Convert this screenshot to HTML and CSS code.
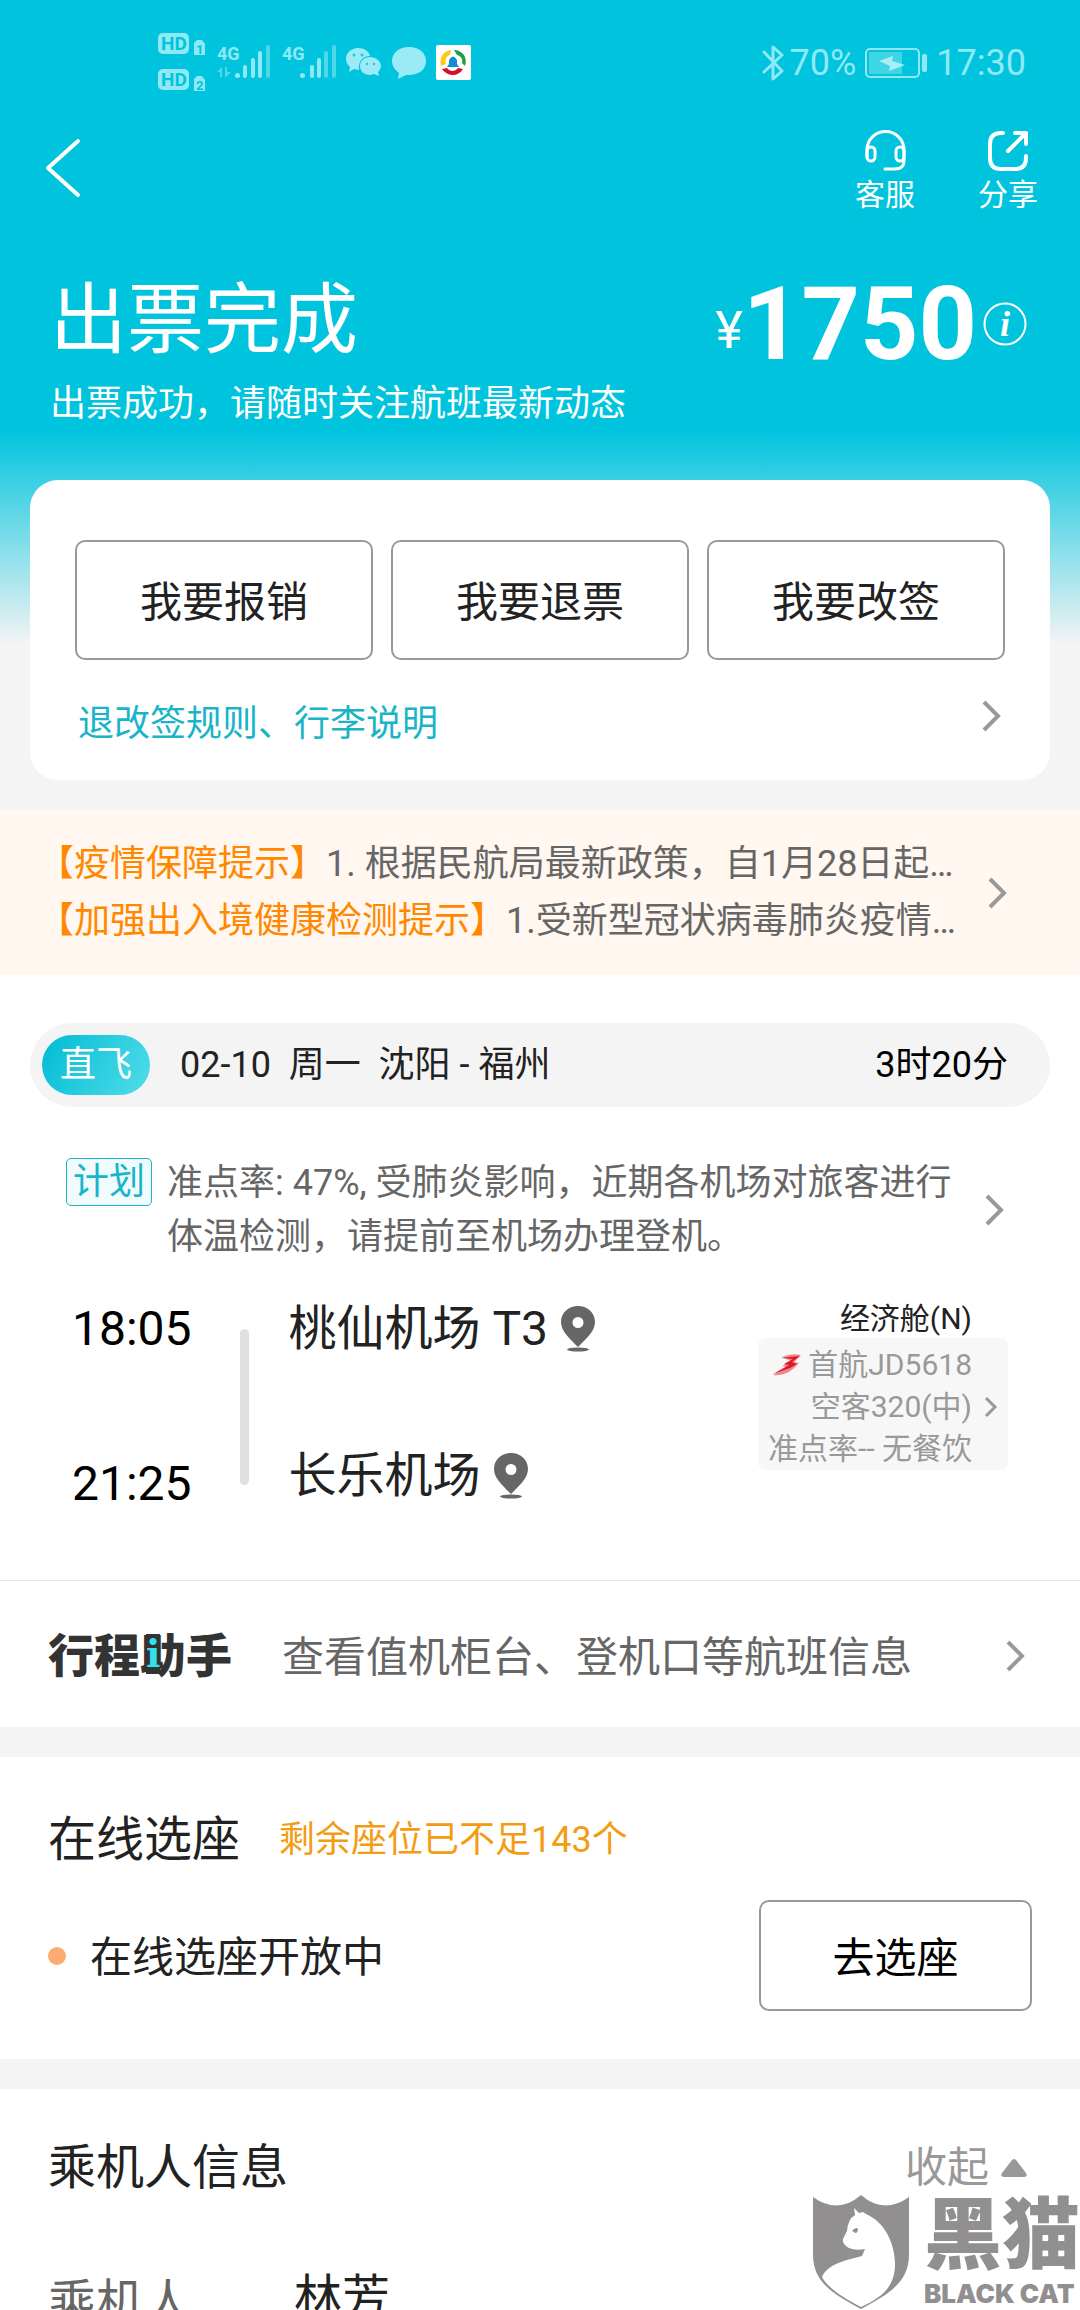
FILE: index.html
```html
<!DOCTYPE html>
<html lang="zh-CN">
<head>
    <meta charset="UTF-8">
    <meta name="viewport" content="width=device-width, initial-scale=1.0">
    <title>订单详情</title>
    <link rel="stylesheet" href="styles.css">
</head>
<body>

<div class="page">

    <div class="statusbar">
        <svg class="status-icons" width="314" height="60" viewBox="0 0 314 60">
            <g fill="#8fe9f5">
                <rect x="0" y="0" width="31" height="21" rx="5"/>
                <rect x="0" y="36" width="31" height="21" rx="5"/>
                <path d="M39 7h5l3 4v11H36V10z"/>
                <path d="M39 43h5l3 4v11H36V46z"/>
                <text class="sim" x="59" y="27">4G</text>
                <text class="sim" x="124" y="27">4G</text>
                <circle cx="79.500" cy="42.500" r="2.500"/>
                <rect x="85" y="32" width="4" height="13" rx="2"/>
                <rect x="93" y="25" width="4" height="20" rx="2"/>
                <rect x="100" y="18" width="4" height="27" rx="2"/>
                <circle cx="144.500" cy="42.500" r="2.500"/>
                <rect x="152" y="32" width="4" height="13" rx="2"/>
                <rect x="159" y="25" width="4" height="20" rx="2"/>
            </g>
            <g fill="#4fd8e9">
                <rect x="108" y="12" width="4" height="33" rx="2"/>
                <rect x="166" y="18" width="4" height="27" rx="2"/>
                <rect x="174" y="12" width="4" height="33" rx="2"/>
                <path d="M59 39l5-5v10h-2v-5zM67 34h2v5h4l-6 6z"/>
            </g>
            <text class="hd" x="3" y="17">HD</text>
            <text class="hd" x="3" y="53">HD</text>
            <text class="sim-no" x="38" y="21">1</text>
            <text class="sim-no" x="38" y="57">2</text>
            <g fill="#9aebf5">
                <path d="M200 15c-7 0-12 5-12 11 0 4 2 6 4 8l-1 5 5-3 5 1c-1-9 4-14 11-14-1-5-6-8-12-8z"/>
                <path d="M212 24c-6 0-10 4-10 9s4 9 10 9l4-1 5 2-1-4c2-2 3-4 3-6 0-5-5-9-11-9z"/>
                <path d="M251 14c-10 0-17 6-17 14 0 5 3 9 7 12l-1 6 8-4c12 1 20-5 20-14 0-8-7-14-17-14z"/>
            </g>
            <g fill="#1ec9df">
                <circle cx="196" cy="22" r="1.500"/><circle cx="204" cy="22" r="1.500"/>
                <circle cx="209" cy="31" r="1.200"/><circle cx="216" cy="31" r="1.200"/>
            </g>
            <rect x="278" y="12" width="35" height="35" rx="2" fill="#fff"/>
            <path d="M283 33c-2-8 2-15 10-16l-1 5c-4 1-5 5-4 9z" fill="#fcc917"/>
            <path d="M296 17c9 0 14 8 11 16l-3-3c1-4-1-7-5-8z" fill="#1fa045"/>
            <path d="M284 36c6 8 16 8 21 0l-5-1c-3 4-8 4-11 0z" fill="#d5102a"/>
            <path d="M291 31v-4q4-7 8 0v4l2 3h-12z" fill="#168bd2"/>
        </svg>
        <div class="status-right">
            <svg width="22" height="36" viewBox="0 0 22 36" fill="none" stroke="#8fe9f5" stroke-width="3" stroke-linejoin="round" stroke-linecap="round">
                <path d="M2 7l18 19-9 8V2l9 8L2 27"/>
            </svg>
            <span>70%</span>
            <svg class="battery" width="62" height="30" viewBox="0 0 62 30">
                <rect x="1" y="1" width="53" height="28" rx="4" fill="none" stroke="#8fe9f5" stroke-width="2"/>
                <rect x="4" y="4" width="33" height="22" fill="#3fd5e7"/>
                <path d="M14 13l14-5-1 5 13 4-16 6 1-5z" fill="#a8eef7"/>
                <rect x="57" y="6" width="5" height="18" rx="2" fill="#8fe9f5"/>
            </svg>
            <span>17:30</span>
        </div>
    </div>

    <div class="navbar">
        <button class="back-button" aria-label="返回">
            <svg width="36" height="60" viewBox="0 0 36 60" fill="none" stroke="#fff" stroke-width="4" stroke-linecap="round" stroke-linejoin="round">
                <path d="M33 3L3 30l30 27"/>
            </svg>
        </button>
        <div class="nav-actions">
            <button class="nav-button">
                <svg width="42" height="42" viewBox="0 0 42 42" fill="none" stroke="#fff" stroke-width="3" stroke-linecap="round">
                    <path d="M3 27V20a18 18 0 0 1 37 0v11q0 8-9 8H21"/>
                    <rect x="3" y="17" width="8" height="14" rx="4"/>
                    <rect x="32" y="17" width="8" height="14" rx="4"/>
                </svg>
                <span>客服</span>
            </button>
            <button class="nav-button">
                <svg width="42" height="42" viewBox="0 0 42 42" fill="none" stroke="#fff" stroke-width="4" stroke-linecap="round" stroke-linejoin="round">
                    <path d="M16 3h-2Q3 3 3 14v14q0 11 11 11h14q11 0 11-11v-2M28 3h11v11M39 3L21 21"/>
                </svg>
                <span>分享</span>
            </button>
        </div>
    </div>

    <div class="summary">
        <div>
            <h1>出票完成</h1>
            <p>出票成功，请随时关注航班最新动态</p>
        </div>
        <div class="price">
            <span class="currency">¥</span><span class="amount">1750</span>
            <svg width="44" height="44" viewBox="0 0 44 44">
                <circle cx="22" cy="22" r="20.500" fill="none" stroke="#fff" stroke-width="2"/>
                <text class="info" x="22" y="34">i</text>
            </svg>
        </div>
    </div>

    <div class="card">
        <div class="card-buttons">
            <button class="outline-button">我要报销</button>
            <button class="outline-button">我要退票</button>
            <button class="outline-button">我要改签</button>
        </div>
        <a class="rules" href="#">
            <span>退改签规则、行李说明</span>
            <svg class="arrow" viewBox="0 0 20 32"><path d="M2 2l14 14L2 30"/></svg>
        </a>
    </div>

    <a class="notice" href="#">
        <div class="notice-text">
            <p><b>【疫情保障提示】</b>1. 根据民航局最新政策，自1月28日起…</p>
            <p><b>【加强出入境健康检测提示】</b>1.受新型冠状病毒肺炎疫情…</p>
        </div>
        <svg class="arrow" viewBox="0 0 20 32"><path d="M2 2l14 14L2 30"/></svg>
    </a>

    <div class="flight">
        <div class="flight-bar">
            <span class="direct">直飞</span>
            <span class="route">02-10&nbsp; 周一&nbsp; 沈阳 - 福州</span>
            <span class="duration">3时20分</span>
        </div>

        <a class="plan" href="#">
            <span class="plan-tag">计划</span>
            <p>准点率: 47%, 受肺炎影响，近期各机场对旅客进行体温检测，请提前至机场办理登机。</p>
            <svg class="arrow" viewBox="0 0 20 32"><path d="M2 2l14 14L2 30"/></svg>
        </a>

        <div class="segment">
            <div class="times">
                <span>18:05</span>
                <span>21:25</span>
            </div>
            <div class="line"></div>
            <div class="airports">
                <span>桃仙机场 T3
                    <svg width="34" height="46" viewBox="0 0 34 46"><path fill-rule="evenodd" d="M17 0C7 0 0 7 0 16c0 9 8 16 17 25 9-9 17-16 17-25C34 7 27 0 17 0zm0 11a5.500 5.500 0 1 1 0 11 5.500 5.500 0 0 1 0-11z"/><ellipse cx="17" cy="43.500" rx="11" ry="2"/></svg>
                </span>
                <span>长乐机场
                    <svg width="34" height="46" viewBox="0 0 34 46"><path fill-rule="evenodd" d="M17 0C7 0 0 7 0 16c0 9 8 16 17 25 9-9 17-16 17-25C34 7 27 0 17 0zm0 11a5.500 5.500 0 1 1 0 11 5.500 5.500 0 0 1 0-11z"/><ellipse cx="17" cy="43.500" rx="11" ry="2"/></svg>
                </span>
            </div>
            <div class="plane">
                <p class="cabin">经济舱(N)</p>
                <a class="plane-box" href="#">
                    <div>
                        <p>
                            <svg width="30" height="22" viewBox="0 0 30 22">
                                <path d="M10 3Q19-1 29 1L22 8l5 1-6 6Q13 22 1 21l14-8-5-1 9-5z" fill="#f0868d"/>
                                <path d="M9 4l19-2-8 6 5 2-7 4L1 20l16-9-5-1 9-5z" fill="#e01825"/>
                            </svg>
                            首航JD5618
                        </p>
                        <p>空客320(中)</p>
                        <p>准点率-- 无餐饮</p>
                    </div>
                    <svg class="arrow-small" viewBox="0 0 14 22"><path d="M2 2l9 9-9 9"/></svg>
                </a>
            </div>
        </div>
    </div>

    <a class="assistant" href="#">
        <span class="assistant-logo">行程助手<i>i</i></span>
        <span class="assistant-text">查看值机柜台、登机口等航班信息</span>
        <svg class="arrow" viewBox="0 0 20 32"><path d="M2 2l14 14L2 30"/></svg>
    </a>

    <div class="section seats">
        <div class="section-head">
            <h2>在线选座</h2>
            <span class="remaining">剩余座位已不足143个</span>
        </div>
        <div class="seat-row">
            <span class="dot"></span>
            <span class="seat-status">在线选座开放中</span>
            <button class="outline-button seat-button">去选座</button>
        </div>
    </div>

    <div class="section passengers">
        <div class="section-head">
            <h2>乘机人信息</h2>
            <button class="collapse">
                收起
                <svg width="26" height="18" viewBox="0 0 26 18"><path d="M11 1q2-2 4 0l10 13q2 4-2 4H3q-4 0-2-4z" fill="#999"/></svg>
            </button>
        </div>
        <dl class="passenger">
            <dt>乘机人</dt>
            <dd>林芳</dd>
        </dl>
    </div>

    <div class="watermark">
        <svg width="98" height="116" viewBox="0 0 98 116">
            <path d="M1 3q25 18 48-2 23 20 48 2v58c0 28-22 40-48 54C23 101 1 89 1 61z" fill="#918f90"/>
            <path d="M42 14l5 5 4-1 3 2c19 8 29 30 29 50 0 22-12 33-34 43C31 104 15 93 10 83c6-14 26-17 40-21l3-7c-6 1-11 1-16-1-4-2-7-6-6-9l4-8q1-12 8-16z" fill="#fff"/>
            <path d="M40 37q4-5 6-2-1 6-4 3z" fill="#918f90"/>
        </svg>
        <div class="watermark-text">
            <span class="watermark-cn">黑猫</span>
            <span class="watermark-en">BLACK CAT</span>
        </div>
    </div>

</div>

</body>
</html>
```

FILE: styles.css
```css
* {
    box-sizing: border-box;
}

body {
    margin: 0;
    font-family: Roboto, "Noto Sans CJK SC", sans-serif;
    font-size: 36px;
    line-height: 48px;
    color: #222;
}

h1, h2, p, dl, dd {
    margin: 0;
    font-weight: 400;
}

a {
    color: inherit;
    text-decoration: none;
}

button {
    font: inherit;
    color: inherit;
    background: none;
    border: none;
    padding: 0;
    cursor: pointer;
}

svg {
    display: block;
    flex-shrink: 0;
}

.page {
    position: relative;
    height: 100vh;
    overflow: hidden;
    background: linear-gradient(#00c4de 430px, #f4f4f4 645px);
}

.arrow {
    width: 20px;
    height: 32px;
    fill: none;
    stroke: #999;
    stroke-width: 4px;
}

.arrow-small {
    width: 14px;
    height: 22px;
    fill: none;
    stroke: #999;
    stroke-width: 3px;
}

/* status bar */
.statusbar {
    display: flex;
    justify-content: space-between;
    align-items: center;
    height: 126px;
    padding: 0 54px 0 158px;
    color: #8fe9f5;
}

.status-right {
    display: flex;
    align-items: center;
    gap: 6px;
}

.battery {
    margin: 0 3px;
}

.hd {
    font: bold 19px Roboto, sans-serif;
    fill: #00c4de;
}

.sim {
    font: bold 18px Roboto, sans-serif;
}

.sim-no {
    font: bold 13px Roboto, sans-serif;
    fill: #00c4de;
}

/* navigation */
.navbar {
    display: flex;
    justify-content: space-between;
    align-items: flex-start;
    padding: 4px 42px 0 45px;
    color: #fff;
}

.back-button {
    padding-top: 8px;
}

.nav-actions {
    display: flex;
    gap: 63px;
}

.nav-button {
    display: flex;
    flex-direction: column;
    align-items: center;
    gap: 5px;
    font-size: 30px;
    line-height: 36px;
}

/* title and price */
.summary {
    display: flex;
    justify-content: space-between;
    align-items: flex-start;
    padding: 63px 53px 52px 50px;
    color: #fff;
}

.summary h1 {
    font-size: 77px;
    line-height: 90px;
    margin-bottom: 14px;
}

.price {
    display: flex;
    align-items: center;
    line-height: 82px;
}

.currency {
    font-size: 52px;
    padding-top: 14px;
}

.amount {
    font-size: 102px;
    font-weight: 700;
    margin-right: 6px;
}

.info {
    font: italic bold 36px "Liberation Serif", serif;
    text-anchor: middle;
    fill: #fff;
}

/* main card */
.card {
    margin: 0 30px 30px;
    padding: 60px 45px 32px;
    background: #fff;
    border-radius: 28px;
}

.card-buttons {
    display: grid;
    grid-template-columns: repeat(3, 1fr);
    gap: 18px;
}

.outline-button {
    height: 120px;
    padding-top: 6px;
    font-size: 42px;
    border: 2px solid #999;
    border-radius: 10px;
}

.rules {
    display: flex;
    justify-content: space-between;
    align-items: flex-start;
    padding: 40px 3px 0;
    color: #18b4c8;
}

/* orange notice */
.notice {
    display: flex;
    justify-content: space-between;
    align-items: center;
    padding: 26px 72px 25px 38px;
    background: #fff7f0;
    color: #666;
}

.notice-text {
    min-width: 0;
}

.notice p {
    line-height: 57px;
    white-space: nowrap;
}

.notice b {
    font-weight: 400;
    color: #ff8800;
}

/* flight */
.flight {
    padding: 48px 30px 72px;
    background: #fff;
}

.flight-bar {
    display: flex;
    align-items: center;
    height: 84px;
    padding: 0 42px 0 12px;
    background: #f4f4f4;
    border-radius: 42px;
}

.direct {
    padding: 0 18px;
    line-height: 60px;
    color: #fff;
    background: linear-gradient(120deg, #00bcd4, #52dde9);
    border-radius: 30px;
}

.route {
    margin-left: 30px;
}

.duration {
    margin-left: auto;
    color: #000;
}

.plan {
    display: flex;
    align-items: flex-start;
    padding: 49px 45px 0 36px;
    color: #666;
}

.plan-tag {
    padding: 0 6px;
    line-height: 46px;
    margin-top: 2px;
    color: #18b4c8;
    background: #f0fbfc;
    border: 1px solid #18b4c8;
    border-radius: 5px;
}

.plan p {
    flex: 1;
    margin: 0 30px 0 15px;
    line-height: 54px;
}

.plan .arrow {
    align-self: center;
}

.segment {
    display: flex;
    margin-top: 36px;
    padding: 0 42px;
    font-size: 48px;
}

.times {
    display: flex;
    flex-direction: column;
    justify-content: space-between;
    height: 208px;
    padding-top: 5px;
    color: #000;
}

.line {
    width: 9px;
    height: 156px;
    margin: 29px 0 0 48px;
    background: #e0e0e0;
    border-radius: 5px;
}

.airports {
    display: flex;
    flex-direction: column;
    gap: 99px;
    margin-left: 40px;
    padding-top: 5px;
}

.airports span {
    display: flex;
    align-items: center;
    gap: 13px;
}

.airports svg {
    fill: #666;
}

.plane {
    margin-left: auto;
    font-size: 30px;
    line-height: 42px;
    text-align: right;
}

.cabin {
    padding-right: 36px;
    line-height: 38px;
}

.plane-box {
    display: flex;
    align-items: center;
    gap: 12px;
    padding: 6px 10px 0;
    background: #f7f7f7;
    border-radius: 8px;
    color: #999;
}

.plane-box p {
    display: flex;
    justify-content: flex-end;
    align-items: center;
    gap: 6px;
    white-space: nowrap;
}

/* trip assistant */
.assistant {
    display: flex;
    align-items: center;
    height: 147px;
    padding: 4px 54px 0 48px;
    background: #fff;
    border-top: 1px solid #e6e6e6;
}

.assistant-logo {
    position: relative;
    font-size: 46px;
    font-weight: 900;
    color: #333;
}

.assistant-logo i {
    position: absolute;
    left: 98px;
    top: 2px;
    width: 14px;
    font: bold 38px/40px "DejaVu Serif", serif;
    text-align: center;
    color: #35dfee;
    background: #333;
}

.assistant-text {
    margin-left: 50px;
    padding-top: 4px;
    font-size: 42px;
    color: #666;
}

.assistant .arrow {
    margin-left: auto;
}

/* seats and passengers */
.section {
    margin-top: 30px;
    padding: 53px 48px 48px;
    background: #fff;
}

.section-head {
    display: flex;
    align-items: center;
}

h2 {
    font-size: 48px;
    line-height: 60px;
}

.remaining {
    margin-left: 39px;
    color: #f39c12;
}

.seat-row {
    display: flex;
    align-items: center;
    margin-top: 30px;
}

.dot {
    width: 18px;
    height: 18px;
    margin-right: 24px;
    background: #fcac72;
    border-radius: 50%;
}

.seat-status {
    padding-top: 4px;
    font-size: 42px;
}

.seat-button {
    width: 273px;
    height: 111px;
    margin-left: auto;
    color: #000;
}

.passengers {
    padding: 49px 48px;
}

.collapse {
    display: flex;
    align-items: center;
    gap: 12px;
    margin-left: auto;
    padding-right: 5px;
    font-size: 42px;
    color: #999;
}

.passenger {
    display: flex;
    margin-top: 70px;
    font-size: 48px;
    line-height: 60px;
}

.passenger dt {
    width: 246px;
    padding-top: 5px;
    color: #666;
}

/* logo over the lower right corner */
.watermark {
    position: absolute;
    right: 0;
    bottom: 0;
    display: flex;
    gap: 14px;
    color: #918f90;
}

.watermark-text {
    display: flex;
    flex-direction: column;
}

.watermark-cn {
    font-size: 78px;
    font-weight: 900;
    line-height: 86px;
}

.watermark-en {
    font: 900 26px/28px Inter, sans-serif;
}
```
